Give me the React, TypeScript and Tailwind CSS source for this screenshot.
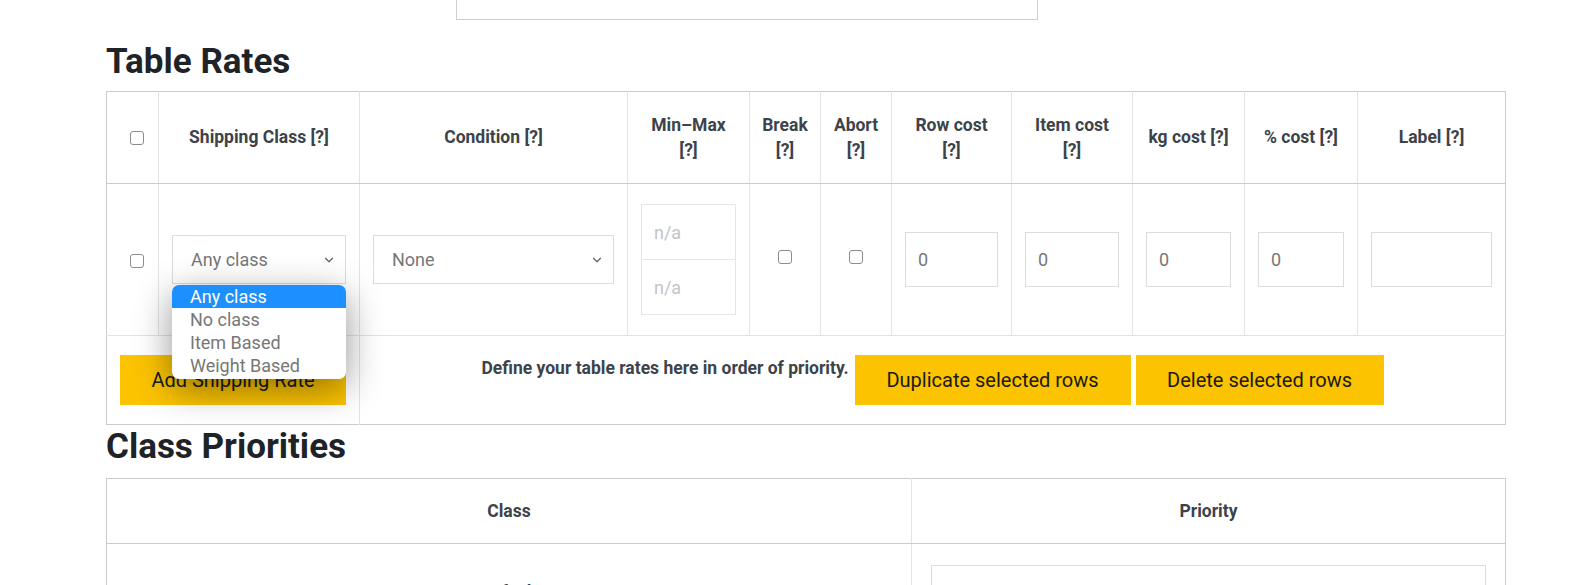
import { ChevronDown } from 'lucide-react';

const FONT = { fontFamily: 'Roboto, "Liberation Sans", sans-serif' };

const rateCols = [52, 201, 268, 122, 71, 71, 120, 121, 112, 113, 148];

const headers: { label: string[] }[] = [
    { label: ['Shipping Class [?]'] },
    { label: ['Condition [?]'] },
    { label: ['Min–Max', '[?]'] },
    { label: ['Break', '[?]'] },
    { label: ['Abort', '[?]'] },
    { label: ['Row cost', '[?]'] },
    { label: ['Item cost', '[?]'] },
    { label: ['kg cost [?]'] },
    { label: ['% cost [?]'] },
    { label: ['Label [?]'] },
];

const classOptions = ['Any class', 'No class', 'Item Based', 'Weight Based'];

function Check() {
    return (
        <input
            type="checkbox"
            className="appearance-none w-[14px] h-[14px] border border-[#8c8c8c] rounded-[3px] bg-white"
        />
    );
}

function CostInput({ value }: { value?: string }) {
    return (
        <input
            type="text"
            defaultValue={value}
            className="w-full h-[55px] border border-[#dcdcdc] px-3 text-[18px] text-[#777] bg-white outline-none"
        />
    );
}

function FakeSelect({ value }: { value: string }) {
    return (
        <div className="relative h-[49px] w-full border border-[#dcdcdc] bg-white flex items-center justify-between pl-[18px] pr-[9px]">
            <span className="text-[18px] text-[#777]">{value}</span>
            <ChevronDown size={14} strokeWidth={2.2} className="text-[#666]" />
        </div>
    );
}

export default function App() {
    return (
        <div className="min-h-screen bg-white" style={FONT}>
            <div className="ml-[106px] w-[1399px]">
                {/* bottom of the field above */}
                <div className="ml-[350px] w-[582px] h-[20px] border border-t-0 border-[#cfcfcf]" />

                <h2 className="mt-[23px] mb-[10px] text-[35px] leading-[38px] font-bold text-[#1d2327]">Table Rates</h2>

                <table className="w-full table-fixed border-collapse border border-[#cbcbcb]">
                    <colgroup>
                        {rateCols.map((w, i) => (
                            <col key={i} style={{ width: w }} />
                        ))}
                    </colgroup>
                    <thead>
                        <tr className="h-[92px]">
                            <th className="border-b border-[#cbcbcb]">
                                <div className="flex justify-center pl-[8px]">
                                    <Check />
                                </div>
                            </th>
                            {headers.map((h, i) => (
                                <th
                                    key={i}
                                    className="border-b border-l border-b-[#cbcbcb] border-l-[#e3e3e3] text-center text-[17.5px] leading-[25px] font-bold text-[#3c434a]"
                                >
                                    {h.label.map((line) => (
                                        <div key={line}>{line}</div>
                                    ))}
                                </th>
                            ))}
                        </tr>
                    </thead>
                    <tbody>
                        <tr className="h-[152px]">
                            <td className="border-b border-[#e3e3e3]">
                                <div className="flex justify-center pl-[8px] pt-[2px]">
                                    <Check />
                                </div>
                            </td>
                            <td className="border-b border-l border-[#e3e3e3] px-[13px]">
                                <div className="relative">
                                    <FakeSelect value="Any class" />
                                    <div className="absolute left-0 top-[50px] w-[174px] z-10 bg-white rounded-[7px] overflow-hidden shadow-[0_10px_36px_rgba(0,0,0,0.42)] pb-[2px]">
                                        {classOptions.map((opt, i) => (
                                            <div
                                                key={opt}
                                                className={
                                                    i === 0
                                                        ? 'h-[23px] leading-[23px] pl-[18px] text-[18px] bg-[#1e8fff] text-white'
                                                        : 'h-[23px] leading-[23px] pl-[18px] text-[18px] text-[#777]'
                                                }
                                            >
                                                {opt}
                                            </div>
                                        ))}
                                    </div>
                                </div>
                            </td>
                            <td className="border-b border-l border-[#e3e3e3] px-[13px]">
                                <FakeSelect value="None" />
                            </td>
                            <td className="border-b border-l border-[#e3e3e3] px-[13px]">
                                <div className="flex flex-col">
                                    <input
                                        placeholder="n/a"
                                        className="h-[56px] w-full border border-[#e6e6e6] px-3 text-[18px] placeholder:text-[#c4c4c4] outline-none"
                                    />
                                    <input
                                        placeholder="n/a"
                                        className="h-[55px] w-full border border-t-0 border-[#e6e6e6] px-3 text-[18px] placeholder:text-[#c4c4c4] outline-none"
                                    />
                                </div>
                            </td>
                            <td className="border-b border-l border-[#e3e3e3]">
                                <div className="flex justify-center pb-[5px]">
                                    <Check />
                                </div>
                            </td>
                            <td className="border-b border-l border-[#e3e3e3]">
                                <div className="flex justify-center pb-[5px]">
                                    <Check />
                                </div>
                            </td>
                            <td className="border-b border-l border-[#e3e3e3] px-[13px]">
                                <CostInput value="0" />
                            </td>
                            <td className="border-b border-l border-[#e3e3e3] px-[13px]">
                                <CostInput value="0" />
                            </td>
                            <td className="border-b border-l border-[#e3e3e3] px-[13px]">
                                <CostInput value="0" />
                            </td>
                            <td className="border-b border-l border-[#e3e3e3] px-[13px]">
                                <CostInput value="0" />
                            </td>
                            <td className="border-b border-l border-[#e3e3e3] px-[13px]">
                                <CostInput />
                            </td>
                        </tr>
                        <tr className="h-[89px]">
                            <td colSpan={2} className="px-[13px]">
                                <button className="w-[226px] h-[50px] bg-[#fbc300] text-[20px] text-[#1a1a1a]">
                                    Add Shipping Rate
                                </button>
                            </td>
                            <td colSpan={9} className="border-l border-[#e3e3e3]">
                                <div className="flex justify-center items-start">
                                    <span className="mt-[1px] text-[17.5px] leading-[24px] font-bold text-[#3c434a] mr-[6px]">
                                        Define your table rates here in order of priority.
                                    </span>
                                    <button className="w-[276px] h-[50px] bg-[#fbc300] text-[20px] text-[#1a1a1a] mr-[5px]">
                                        Duplicate selected rows
                                    </button>
                                    <button className="w-[248px] h-[50px] bg-[#fbc300] text-[20px] text-[#1a1a1a]">
                                        Delete selected rows
                                    </button>
                                </div>
                            </td>
                        </tr>
                    </tbody>
                </table>

                <h2 className="mt-[3px] mb-[12px] text-[35px] leading-[38px] font-bold text-[#1d2327]">Class Priorities</h2>

                <table className="w-full table-fixed border-collapse border border-[#cbcbcb]">
                    <colgroup>
                        <col style={{ width: 805 }} />
                        <col style={{ width: 594 }} />
                    </colgroup>
                    <thead>
                        <tr className="h-[65px]">
                            <th className="border-b border-[#cbcbcb] text-center text-[17.5px] font-bold text-[#3c434a]">Class</th>
                            <th className="border-b border-l border-b-[#cbcbcb] border-l-[#e3e3e3] text-center text-[17.5px] font-bold text-[#3c434a]">
                                Priority
                            </th>
                        </tr>
                    </thead>
                    <tbody>
                        <tr>
                            <td className="text-center text-[17.5px] font-bold text-[#3c434a]">Default</td>
                            <td className="border-l border-[#e3e3e3] px-[19px] py-[21px]">
                                <input className="w-full h-[55px] border border-[#dcdcdc] px-3 text-[18px] outline-none" />
                            </td>
                        </tr>
                    </tbody>
                </table>
            </div>
        </div>
    );
}
